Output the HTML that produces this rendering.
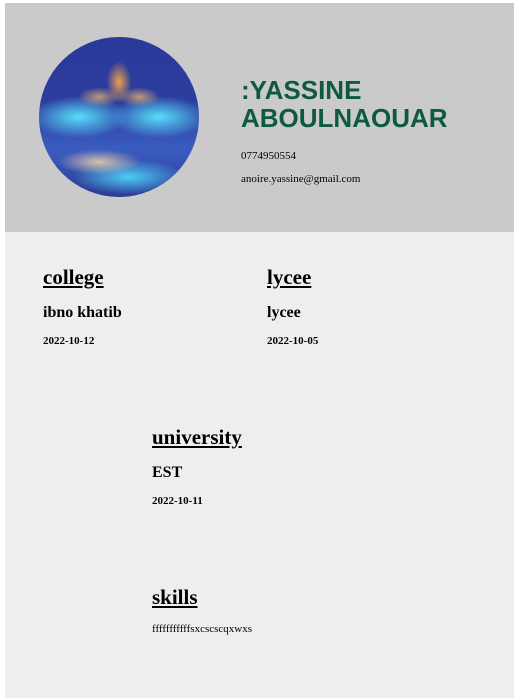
<!DOCTYPE html>
<html><head><meta charset="utf-8"><style>
*{margin:0;padding:0}
body{width:514px;height:698px;background:#fff;position:relative;overflow:hidden;font-family:"Liberation Serif",serif}
#hd{position:absolute;left:5px;top:3px;width:509px;height:229px;background:#cacaca}
#bd{position:absolute;left:5px;top:232px;width:509px;height:466px;background:#eeeeee}
.a{position:absolute;white-space:nowrap}
.av{position:absolute;left:39px;top:37px;width:160px;height:160px;border-radius:50%;overflow:hidden;
background:
radial-gradient(ellipse 18px 30px at 80px 45px,rgba(255,170,70,.9),transparent 70%),
radial-gradient(ellipse 30px 14px at 60px 60px,rgba(255,190,100,.7),transparent 70%),
radial-gradient(ellipse 30px 14px at 100px 60px,rgba(255,190,100,.7),transparent 70%),
radial-gradient(ellipse 70px 30px at 40px 80px,rgba(90,230,255,.95),transparent 70%),
radial-gradient(ellipse 70px 30px at 120px 80px,rgba(90,230,255,.95),transparent 70%),
radial-gradient(ellipse 60px 18px at 60px 125px,rgba(255,220,170,.8),transparent 70%),
radial-gradient(ellipse 80px 25px at 90px 140px,rgba(80,220,250,.9),transparent 70%),
linear-gradient(#2a3a9a,#2c3d9e 40%,#3a5cc0 70%,#2d3b95);}
h1{font-family:"Liberation Sans",sans-serif;font-size:26px;font-weight:bold;color:#0d5a3d;line-height:28px}
h2{font-size:21px;font-weight:bold;text-decoration:underline}
.s{font-size:16px;font-weight:bold}
.d{font-size:11px;font-weight:bold}
.t{font-size:11px}
</style></head><body>
<div id="hd"></div><div id="bd"></div>
<div class="av"></div>
<h1 class="a" style="left:241px;top:76px">:YASSINE<br>ABOULNAOUAR</h1>
<div class="a t" style="left:241px;top:150px">0774950554</div>
<div class="a t" style="left:241px;top:173px">anoire.yassine@gmail.com</div>

<h2 class="a" style="left:43px;top:265px">college</h2>
<div class="a s" style="left:43px;top:304px">ibno khatib</div>
<div class="a d" style="left:43px;top:335px">2022-10-12</div>

<h2 class="a" style="left:267px;top:265px">lycee</h2>
<div class="a s" style="left:267px;top:304px">lycee</div>
<div class="a d" style="left:267px;top:335px">2022-10-05</div>

<h2 class="a" style="left:152px;top:425px">university</h2>
<div class="a s" style="left:152px;top:464px">EST</div>
<div class="a d" style="left:152px;top:495px">2022-10-11</div>

<h2 class="a" style="left:152px;top:585px">skills</h2>
<div class="a t" style="left:152px;top:623px">fffffffffffsxcscscqxwxs</div>
</body></html>
